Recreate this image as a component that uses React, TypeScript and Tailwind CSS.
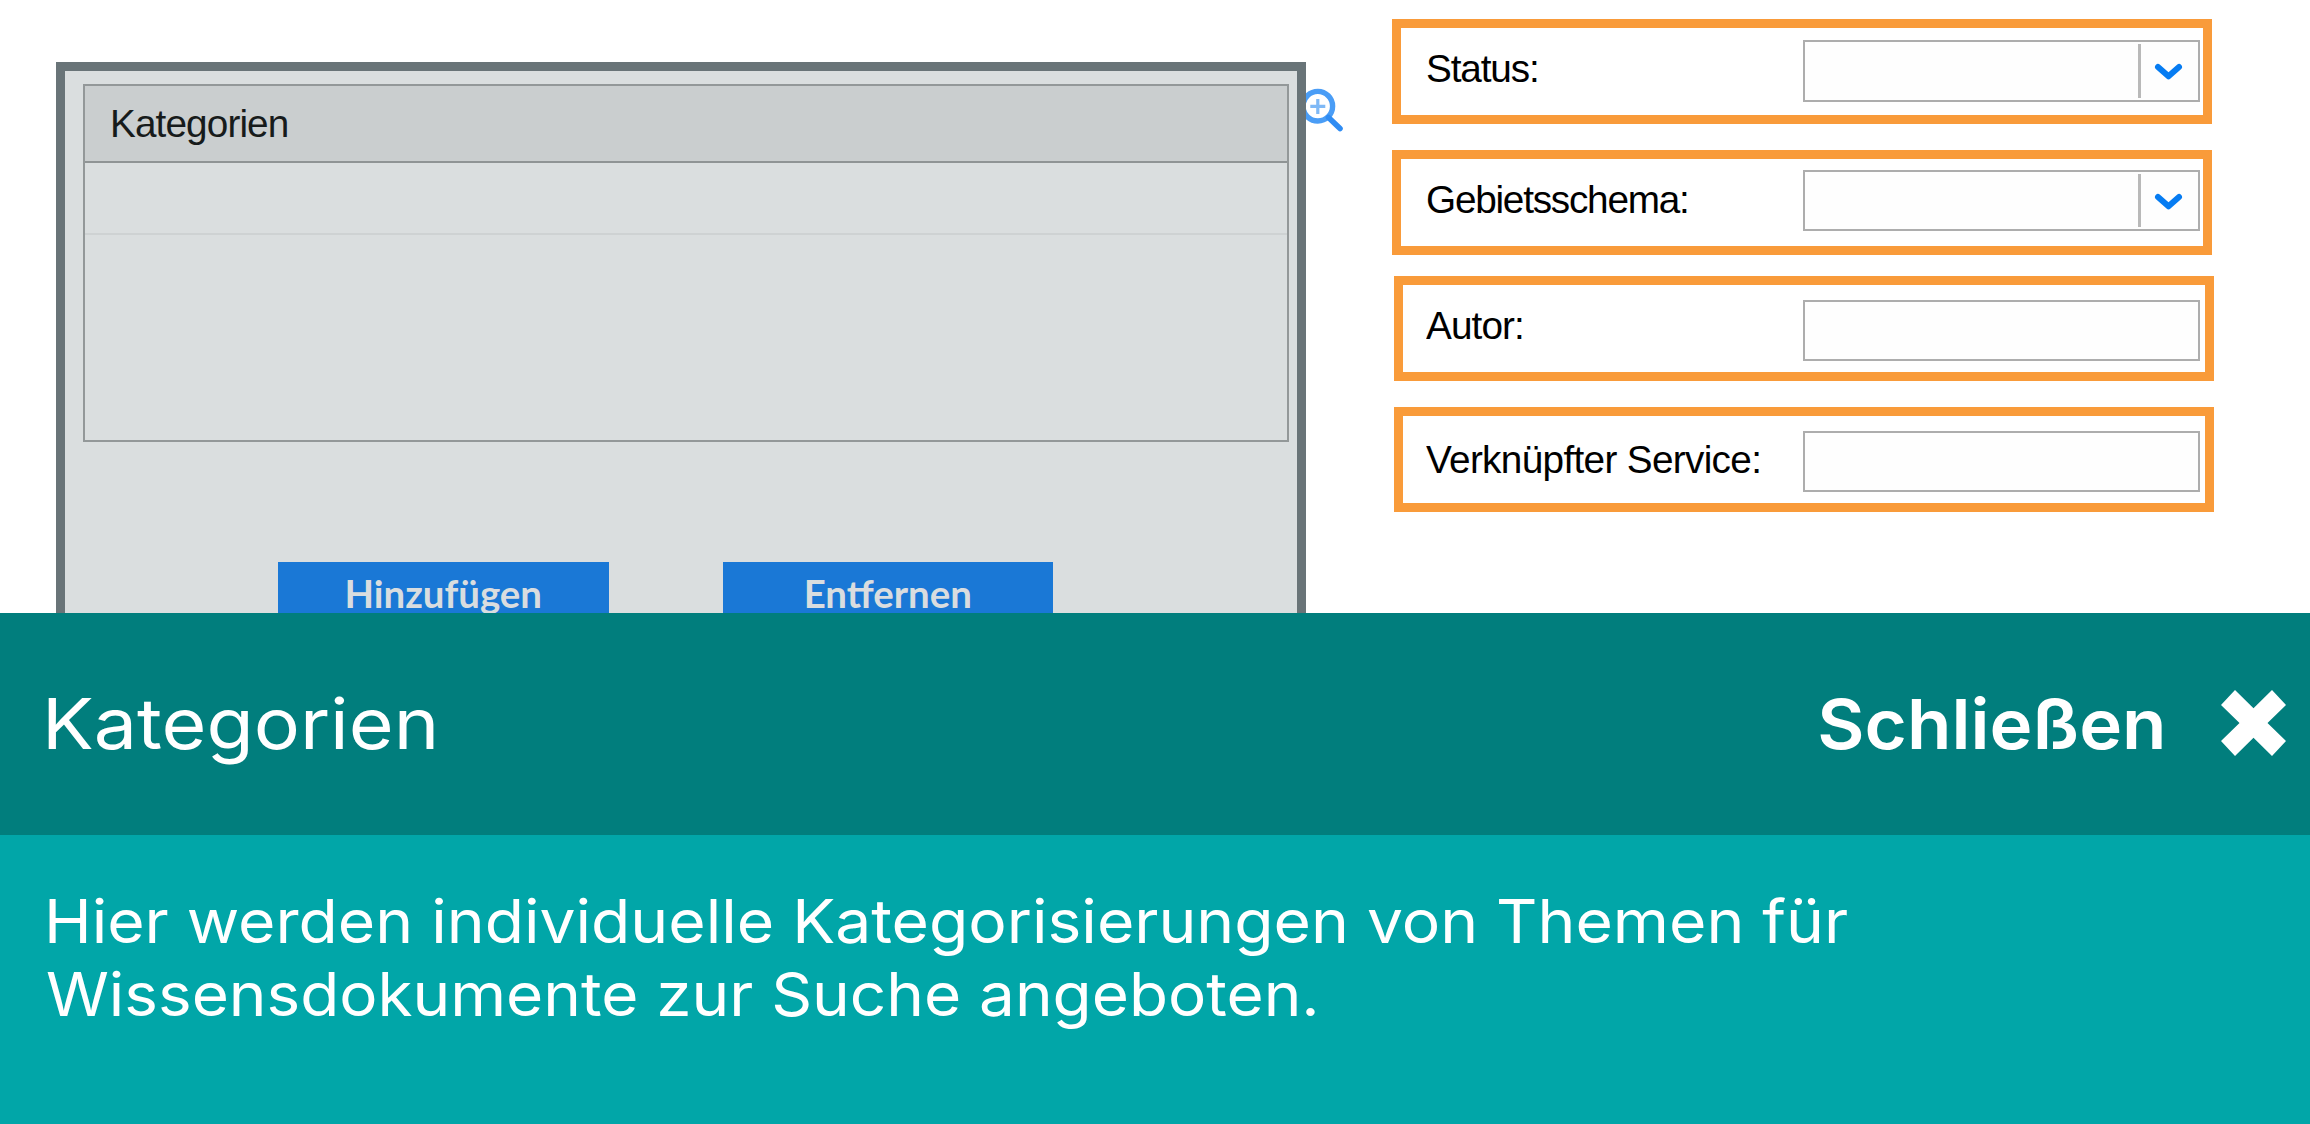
import React from 'react';

type FieldProps = {
  label: string;
  select?: boolean;
  frame: string;
  text: string;
  input: string;
};

function Chevron() {
  return (
    <svg className="h-[22px] w-[32px]" viewBox="0 0 32 22" fill="none">
      <path
        d="M5 7L15.5 16.3L26 7"
        stroke="#067cf2"
        strokeWidth="6"
        strokeLinecap="round"
        strokeLinejoin="round"
      />
    </svg>
  );
}

function MagnifierPlus() {
  return (
    <svg className="h-[52px] w-[44px]" viewBox="0 0 44 52" fill="none">
      <circle cx="11.8" cy="22.2" r="14.8" stroke="#4a9df6" strokeWidth="5.4" />
      <path d="M11.8 15v15M4.3 22.4h15" stroke="#7fb9f6" strokeWidth="3.2" />
      <path d="M22.5 33.5L34 44.5" stroke="#2f8cf3" strokeWidth="5.6" strokeLinecap="round" />
    </svg>
  );
}

function Field({ label, select = false, frame, text, input }: FieldProps) {
  return (
    <div className={`flex h-[105px] w-[820px] items-start border-[9px] border-[#f99b3a] ${frame}`}>
      <label
        className={`shrink-0 whitespace-nowrap font-['Liberation_Sans',sans-serif] text-[39.5px] leading-[48px] text-black ${text}`}
      >
        <span className="inline-block origin-left scale-x-[0.98]">{label}</span>
      </label>
      <div className={`flex w-[397px] shrink-0 items-stretch border-2 border-[#adadad] bg-[#fefefe] ${input}`}>
        {select && (
          <div className="my-[2px] ml-auto flex w-[60px] items-center justify-center border-l-[3px] border-[#b9b9b9] pr-[1px]">
            <Chevron />
          </div>
        )}
      </div>
    </div>
  );
}

function PanelButton({ label, className }: { label: string; className: string }) {
  return (
    <button
      className={`flex h-[66px] justify-center bg-[#1a78d6] pt-[8px] font-['Lato',sans-serif] text-[38.4px] font-bold leading-[46px] text-[#d9dddf] ${className}`}
    >
      {label}
    </button>
  );
}

function CategoriesPanel() {
  return (
    <section className="ml-[56px] mt-[62px] h-[551px] w-[1250px] shrink-0 overflow-hidden border-x-[9px] border-t-[9px] border-[#697478] bg-[#dadedf]">
      <div className="ml-[18px] mt-[13px] h-[358px] w-[1206px] border-2 border-[#939899]">
        <div className="flex h-[77px] items-center border-b-2 border-[#8f9495] bg-[#cacecf] pb-[2px] pl-[24.5px]">
          <span className="inline-block origin-left scale-x-[0.98] font-['Liberation_Sans',sans-serif] text-[39.5px] leading-[48px] tracking-[-0.9px] text-[#171b1b]">
            Kategorien
          </span>
        </div>
        <div className="h-[72px] border-b-2 border-[#ced2d3]" />
      </div>
      <div className="mt-[119.5px] flex">
        <PanelButton label="Hinzufügen" className="ml-[213px] w-[330.5px]" />
        <PanelButton label="Entfernen" className="ml-[114.5px] w-[329.5px]" />
      </div>
    </section>
  );
}

export default function App() {
  return (
    <main className="flex h-[1124px] w-[2310px] flex-col overflow-hidden bg-white">
      <div className="flex h-[613px] shrink-0 items-start overflow-hidden">
        <CategoriesPanel />
        <div className="mt-[84px] w-[86px] shrink-0">
          <MagnifierPlus />
        </div>
        <div className="flex shrink-0 flex-col pt-[19px]">
          <Field
            label="Status:"
            select
            frame=""
            text="ml-[25px] mt-[16px] w-[377px] tracking-[-1.15px]"
            input="mt-[12px] h-[62px]"
          />
          <Field
            label="Gebietsschema:"
            select
            frame="mt-[26px]"
            text="ml-[25px] mt-[16px] w-[377px] tracking-[-1.25px]"
            input="mt-[11px] h-[61px]"
          />
          <Field
            label="Autor:"
            frame="mt-[21px] ml-[2px]"
            text="ml-[23px] mt-[16px] w-[377px] tracking-[-0.9px]"
            input="mt-[15px] h-[61px]"
          />
          <Field
            label="Verknüpfter Service:"
            frame="mt-[26px] ml-[2px]"
            text="ml-[23px] mt-[19px] w-[377px] tracking-[-0.68px]"
            input="mt-[15px] h-[61px]"
          />
        </div>
      </div>

      <header className="flex h-[222px] shrink-0 items-center bg-[#017e7d] pl-[42px] pr-[24px] font-['Inter',sans-serif] text-white">
        <h1 className="origin-left scale-x-[1.093] text-[70.5px] font-normal leading-[84px]">Kategorien</h1>
        <button className="ml-auto flex items-center">
          <span className="inline-block origin-right scale-x-[1.05] text-[69.2px] font-semibold leading-[84px]">
            Schließen
          </span>
          <svg className="mb-[3px] ml-[54px] h-[66px] w-[65px]" viewBox="0 0 65 66" fill="#ffffff">
            <path d="M14 0L32.5 18.3L51 0L65 15L46.5 33L65 51L51 66L32.5 47.7L14 66L0 51L18.5 33L0 15Z" />
          </svg>
        </button>
      </header>

      <div className="flex-1 bg-[#01a6a8] pt-[50px] font-['Inter',sans-serif] text-[59.9px] leading-[73px] text-white">
        <p className="ml-[44px] w-max origin-left scale-x-[1.071] whitespace-nowrap">
          Hier werden individuelle Kategorisierungen von Themen für
        </p>
        <p className="ml-[45.5px] w-max origin-left scale-x-[1.065] whitespace-nowrap">
          Wissensdokumente zur Suche angeboten.
        </p>
      </div>
    </main>
  );
}
